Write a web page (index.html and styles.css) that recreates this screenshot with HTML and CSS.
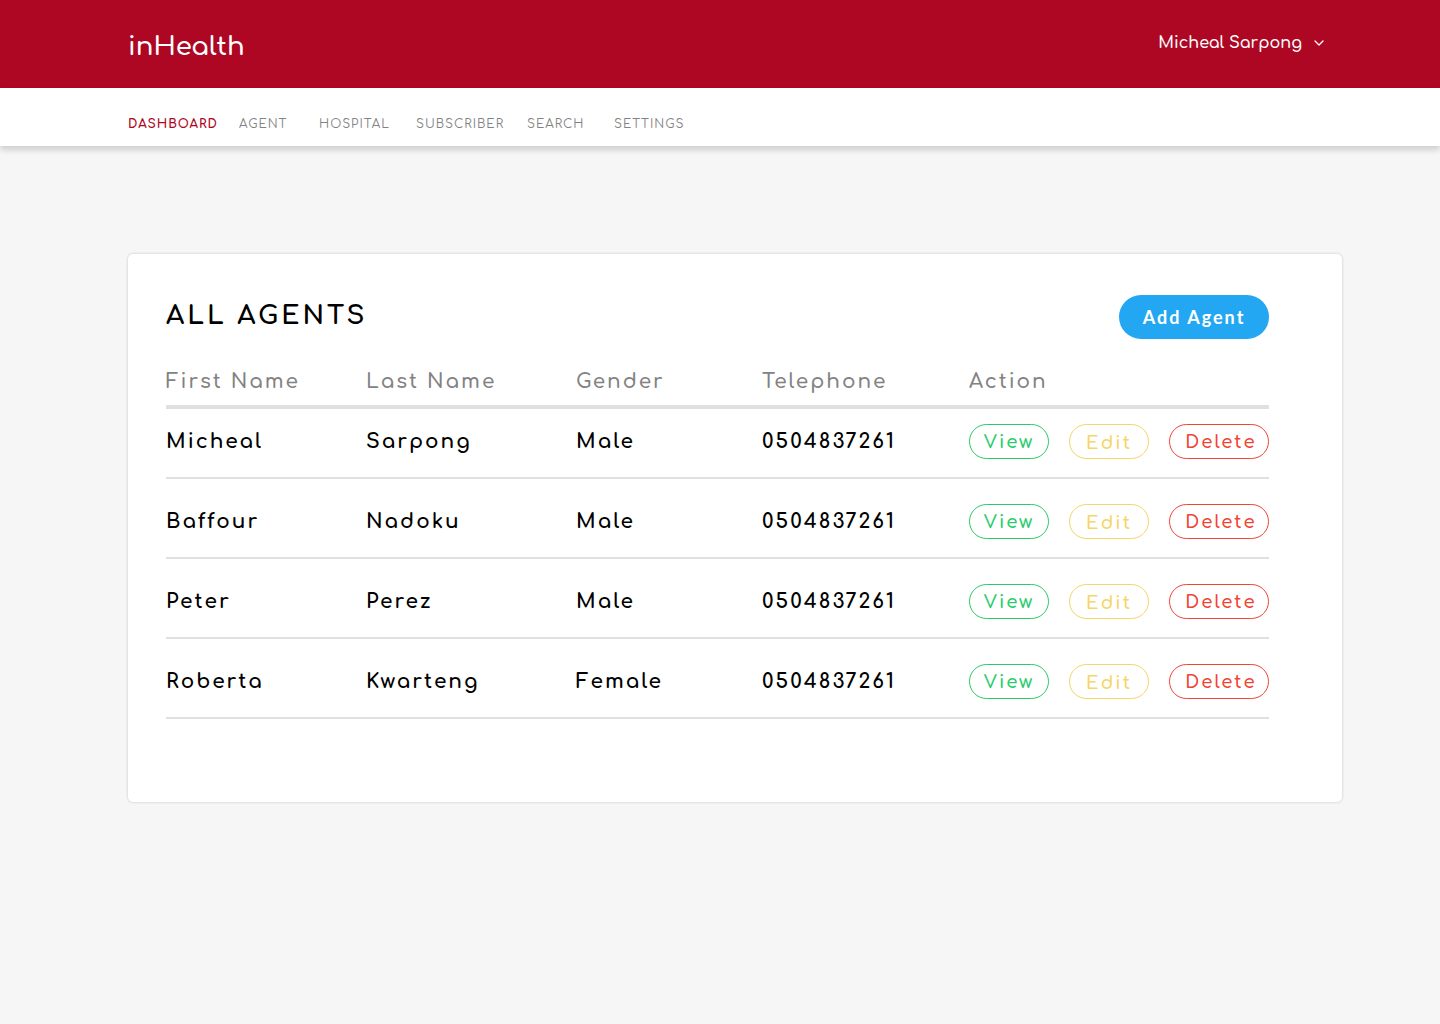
FILE: index.html
```html
<!DOCTYPE html>
<html lang="en">
<head>
<meta charset="utf-8">
<meta name="viewport" content="width=device-width, initial-scale=1">
<title>inHealth</title>
<link rel="stylesheet" href="styles.css">
</head>
<body>
<header class="topbar">
  <a class="logo" href="#">inHealth</a>
  <button class="account" type="button">Micheal Sarpong
    <svg class="chevron" viewBox="0 0 10 6" aria-hidden="true"><path d="M1 1l4 4 4-4"/></svg>
  </button>
</header>
<nav class="nav">
  <a class="nav-link active" href="#">DASHBOARD</a>
  <a class="nav-link" href="#">AGENT</a>
  <a class="nav-link" href="#">HOSPITAL</a>
  <a class="nav-link" href="#">SUBSCRIBER</a>
  <a class="nav-link" href="#">SEARCH</a>
  <a class="nav-link" href="#">SETTINGS</a>
</nav>
<main class="card">
  <div class="card-head">
    <h1 class="title">ALL AGENTS</h1>
    <button class="add" type="button">Add Agent</button>
  </div>
  <table class="agents">
    <colgroup><col class="col-first"><col class="col-last"><col class="col-gender"><col class="col-phone"><col class="col-action"></colgroup>
    <thead>
      <tr><th>First Name</th><th>Last Name</th><th>Gender</th><th>Telephone</th><th>Action</th></tr>
    </thead>
    <tbody>
      <tr><td>Micheal</td><td>Sarpong</td><td>Male</td><td>0504837261</td><td><div class="actions"><button class="pill view" type="button">View</button><button class="pill edit" type="button">Edit</button><button class="pill delete" type="button">Delete</button></div></td></tr>
      <tr><td>Baffour</td><td>Nadoku</td><td>Male</td><td>0504837261</td><td><div class="actions"><button class="pill view" type="button">View</button><button class="pill edit" type="button">Edit</button><button class="pill delete" type="button">Delete</button></div></td></tr>
      <tr><td>Peter</td><td>Perez</td><td>Male</td><td>0504837261</td><td><div class="actions"><button class="pill view" type="button">View</button><button class="pill edit" type="button">Edit</button><button class="pill delete" type="button">Delete</button></div></td></tr>
      <tr><td>Roberta</td><td>Kwarteng</td><td>Female</td><td>0504837261</td><td><div class="actions"><button class="pill view" type="button">View</button><button class="pill edit" type="button">Edit</button><button class="pill delete" type="button">Delete</button></div></td></tr>
    </tbody>
  </table>
</main>
</body>
</html>
```
FILE: styles.css
```css
* { box-sizing: border-box; }

body {
  margin: 0;
  background: #f6f6f6;
  color: #000;
  font-family: Comfortaa, Lato, sans-serif;
}

button { font-family: inherit; cursor: pointer; }
a { text-decoration: none; }

.topbar {
  display: flex;
  justify-content: space-between;
  align-items: center;
  height: 88px;
  padding: 6px 116px 0 128px;
  background: #ad0723;
}

.logo {
  color: #fff;
  font-size: 26px;
  font-weight: 600;
  line-height: 36px;
}

.account {
  display: flex;
  align-items: center;
  gap: 12px;
  padding: 0 0 8px;
  border: 0;
  background: none;
  color: #fff;
  font-size: 16px;
  font-weight: 600;
  line-height: 24px;
}

.chevron {
  width: 10px;
  height: 6px;
  fill: none;
  stroke: #fff;
  stroke-width: 1.3;
  stroke-linecap: round;
  stroke-linejoin: round;
}

.nav {
  display: grid;
  grid-template-columns: 111px 80px 97px 111px 87px auto;
  padding: 28px 98px 14px 128px;
  background: #fff;
  box-shadow: 0 4px 6px rgba(0, 0, 0, 0.16);
}

.nav-link {
  color: #828282;
  font-size: 12px;
  line-height: 16px;
  letter-spacing: 1px;
}

.nav-link.active { color: #ad0723; font-weight: 700; }

.card {
  margin: 108px 98px 48px 128px;
  padding: 41px 73px 83px 38px;
  border-radius: 5px;
  background: #fff;
  box-shadow: 0 0 3px rgba(0, 0, 0, 0.2);
}

.card-head {
  display: flex;
  justify-content: space-between;
}

.title {
  margin: 0;
  font-size: 26px;
  font-weight: 700;
  line-height: 42px;
  letter-spacing: 3px;
}

.add {
  width: 150px;
  height: 44px;
  padding: 0;
  border: 0;
  border-radius: 22px;
  background: #24a7f2;
  color: #fff;
  font-family: Lato, sans-serif;
  font-size: 18px;
  font-weight: 700;
  letter-spacing: 2px;
}

.agents {
  width: 100%;
  table-layout: fixed;
  border-spacing: 0;
  font-size: 20px;
  letter-spacing: 2px;
  text-align: left;
}

.col-first { width: 200px; }
.col-last { width: 210px; }
.col-gender { width: 186px; }
.col-phone { width: 207px; }
.col-action { width: 300px; }

.agents th {
  padding: 30px 0 10px;
  border-bottom: 4px solid #e0e0e0;
  color: #828282;
  font-weight: 600;
  line-height: 26px;
}

.agents td {
  padding: 25px 0 18px;
  border-bottom: 2px solid #e0e0e0;
  font-weight: 700;
  line-height: 35px;
  vertical-align: top;
}

.agents tbody tr:first-child td { padding-top: 15px; }

.actions { display: flex; gap: 20px; }

.pill {
  width: 80px;
  height: 35px;
  padding: 0;
  border: 1px solid currentColor;
  border-radius: 18px;
  background: none;
  font-size: 18px;
  font-weight: 600;
  line-height: 24px;
  letter-spacing: 2px;
}

.view { color: #27cb6c; }
.edit { padding-top: 2px; color: #f5d565; }
.delete { width: 100px; padding-left: 4px; color: #f04434; }
```
